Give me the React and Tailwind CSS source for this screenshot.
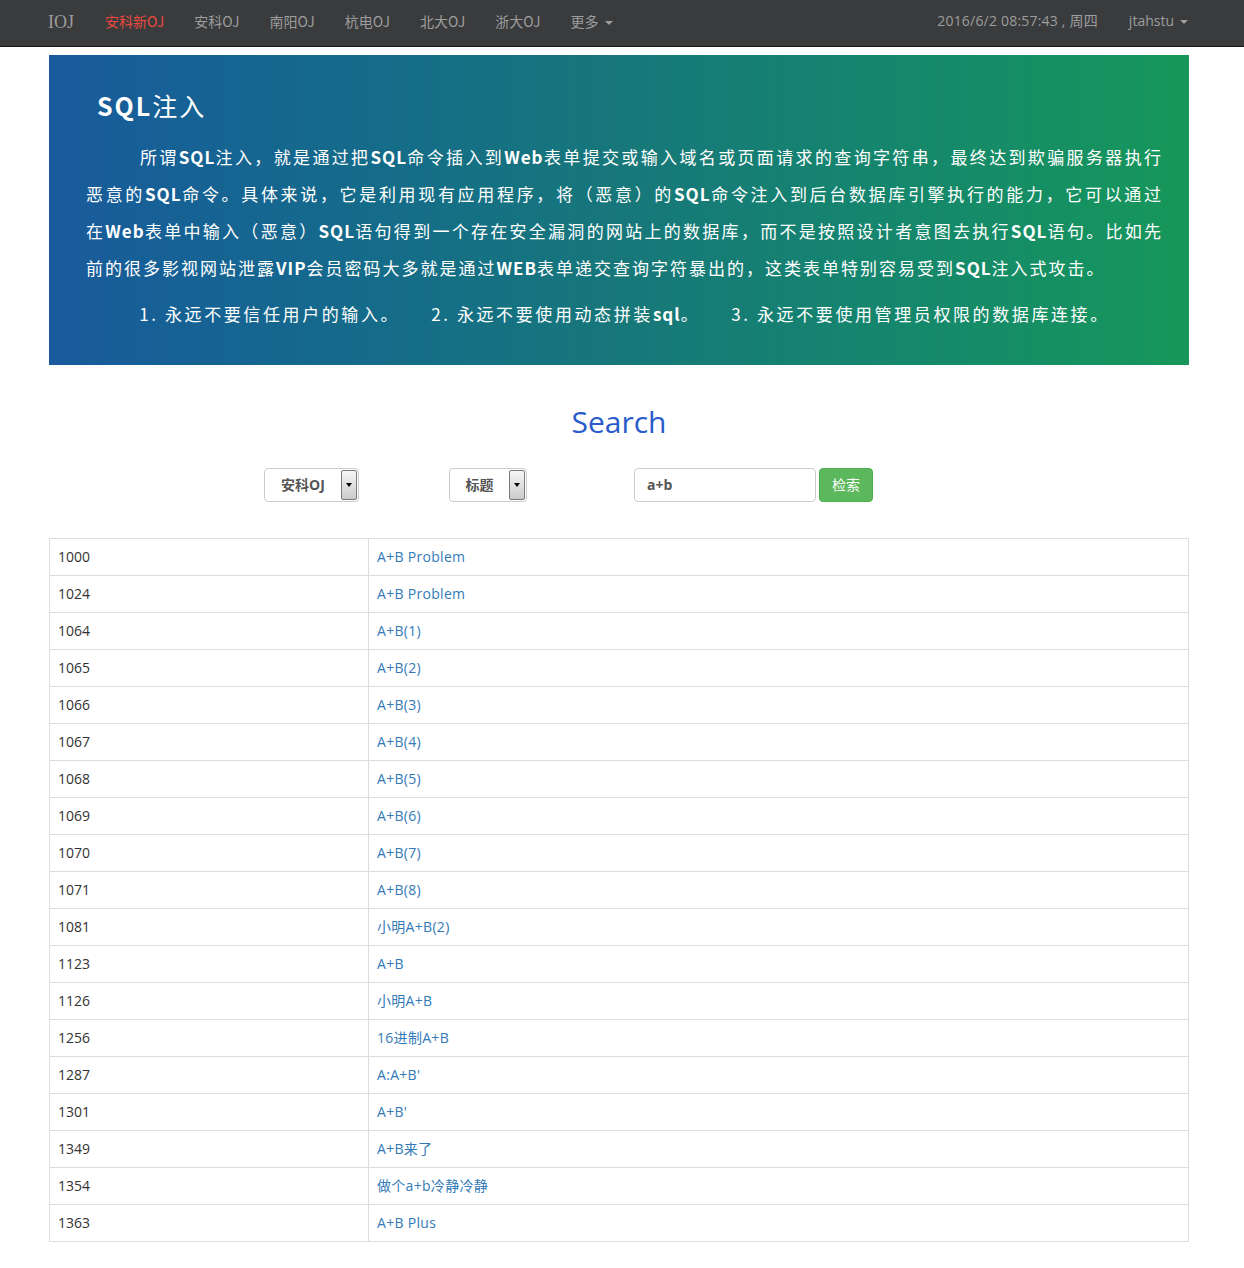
import React from "react";

const navLinks = ["安科新OJ", "安科OJ", "南阳OJ", "杭电OJ", "北大OJ", "浙大OJ"];

const introLines = [
  "所谓SQL注入，就是通过把SQL命令插入到Web表单提交或输入域名或页面请求的查询字符串，最终达到欺骗服务器执行",
  "恶意的SQL命令。具体来说，它是利用现有应用程序，将（恶意）的SQL命令注入到后台数据库引擎执行的能力，它可以通过",
  "在Web表单中输入（恶意）SQL语句得到一个存在安全漏洞的网站上的数据库，而不是按照设计者意图去执行SQL语句。比如先",
  "前的很多影视网站泄露VIP会员密码大多就是通过WEB表单递交查询字符暴出的，这类表单特别容易受到SQL注入式攻击。",
];

const rules = [
  "1. 永远不要信任用户的输入。",
  "2. 永远不要使用动态拼装sql。",
  "3. 永远不要使用管理员权限的数据库连接。",
];

const problems = [
  ["1000", "A+B Problem"],
  ["1024", "A+B Problem"],
  ["1064", "A+B(1)"],
  ["1065", "A+B(2)"],
  ["1066", "A+B(3)"],
  ["1067", "A+B(4)"],
  ["1068", "A+B(5)"],
  ["1069", "A+B(6)"],
  ["1070", "A+B(7)"],
  ["1071", "A+B(8)"],
  ["1081", "小明A+B(2)"],
  ["1123", "A+B"],
  ["1126", "小明A+B"],
  ["1256", "16进制A+B"],
  ["1287", "A:A+B'"],
  ["1301", "A+B'"],
  ["1349", "A+B来了"],
  ["1354", "做个a+b冷静冷静"],
  ["1363", "A+B Plus"],
];

// latin runs in the banner come out bold in the original font
const withBoldLatin = (text) =>
  text.split(/([A-Za-z]+)/).map((part, i) =>
    /^[A-Za-z]+$/.test(part) ? (
      <b key={i} className="font-bold tracking-[1px]">
        {part}
      </b>
    ) : (
      <span key={i}>{part}</span>
    )
  );

const Caret = ({ className = "" }) => (
  <span
    className={`inline-block w-0 h-0 ml-1.5 align-middle border-x-4 border-x-transparent border-t-4 border-t-[#9d9d9d] ${className}`}
  />
);

const FakeSelect = ({ label, width }) => (
  <div
    className={`h-[34px] ${width} flex items-stretch rounded border border-[#ccc] bg-white pr-px py-px`}
  >
    <span className="flex-1 flex items-center justify-center text-sm font-bold text-[#555]">
      {label}
    </span>
    <span className="w-[16px] flex items-center justify-center rounded-[2px] border border-[#7a7a7a] bg-gradient-to-b from-[#f6f6f6] to-[#cbcbcb]">
      <span className="w-0 h-0 border-x-[3px] border-x-transparent border-t-[4px] border-t-black" />
    </span>
  </div>
);

export default function App() {
  return (
    <div className="min-h-screen bg-white font-['Open_Sans','Noto_Sans_CJK_SC',sans-serif] text-[#333]">
      <nav className="h-[47px] bg-[#3a3b3d] border-b border-[#161616] flex items-start text-sm text-[#9d9d9d]">
        <span className="ml-[48px] pt-[10px] font-['Liberation_Serif',serif] text-[18px] leading-6">
          IOJ
        </span>

        <ul className="ml-[16px] flex">
          {navLinks.map((link, index) => (
            <li
              key={link}
              className={`px-[15px] pt-[11px] leading-5 font-['Noto_Sans_CJK_SC',sans-serif] ${
                index === 0 ? "text-[#ea4a3e]" : ""
              }`}
            >
              {link}
            </li>
          ))}
          <li className="px-[15px] pt-[11px] leading-5 font-['Noto_Sans_CJK_SC',sans-serif]">
            更多
            <Caret />
          </li>
        </ul>

        <div className="ml-auto mr-[56px] flex pt-[11px] leading-5">
          <span className="tracking-[0.2px]">2016/6/2 08:57:43 , 周四</span>
          <span className="ml-[31px]">
            jtahstu
            <Caret />
          </span>
        </div>
      </nav>

      <main className="ml-[49px] w-[1140px] pb-[26px]">
        <section className="mt-2 bg-gradient-to-r from-[#195a9c] via-[#17777a] to-[#17975a] text-white font-['Noto_Sans_CJK_SC',sans-serif] pl-[37px] pr-[26px] pt-[31px] pb-[33px]">
          <h1 className="ml-[11px] text-[25px] leading-[39px] tracking-[2px]">
            <b className="font-bold">SQL</b>注入
          </h1>

          <div className="mt-[13px] text-[17px] leading-[37px] tracking-[2px]">
            {introLines.map((line, index) => (
              <div
                key={index}
                className={`whitespace-nowrap ${
                  index === 0 ? "pl-[54px]" : ""
                } ${
                  index < introLines.length - 1
                    ? "text-justify [text-align-last:justify]"
                    : ""
                }`}
              >
                {withBoldLatin(line)}
              </div>
            ))}
          </div>

          <div className="mt-[9px] flex justify-center gap-[31px] text-[17px] leading-[37px] tracking-[2.6px]">
            {rules.map((rule) => (
              <span key={rule}>{withBoldLatin(rule)}</span>
            ))}
          </div>
        </section>

        <h2 className="mt-[37px] text-center text-[30px] leading-10 text-[#2a5bcb]">
          Search
        </h2>

        <div className="mt-[26px] flex items-center pl-[215px]">
          <FakeSelect label="安科OJ" width="w-[95px]" />

          <div className="ml-[90px]">
            <FakeSelect label="标题" width="w-[78px]" />
          </div>

          <div className="ml-[107px] h-[34px] w-[182px] rounded border border-[#ccc] bg-white px-3 flex items-center text-sm font-bold text-[#555]">
            a+b
          </div>

          <button className="ml-[3px] h-[34px] w-[54px] rounded border border-[#4cae4c] bg-[#5cb85c] text-sm text-white">
            检索
          </button>
        </div>

        <table className="mt-[36px] w-full table-fixed border-collapse border border-[#ddd] text-sm">
          <colgroup>
            <col className="w-[319px]" />
            <col />
          </colgroup>
          <tbody>
            {problems.map(([id, title]) => (
              <tr key={id}>
                <td className="border border-[#ddd] px-2 py-2 leading-5">
                  {id}
                </td>
                <td className="border border-[#ddd] px-2 py-2 leading-5 text-[#337ab7] tracking-[0.3px]">
                  {title}
                </td>
              </tr>
            ))}
          </tbody>
        </table>
      </main>
    </div>
  );
}
